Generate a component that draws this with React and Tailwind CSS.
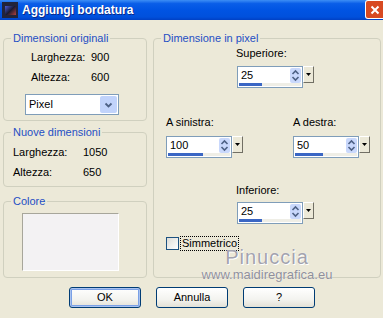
import React from 'react';

const Spin = ({ value, fill }) => (
  <div className="flex items-start">
    <div className="flex h-[22px] w-[66px] flex-col border border-[#7f9db9] bg-white">
      <div className="flex flex-1 items-start justify-between pl-[3px] pr-[1px] pt-[1px]">
        <span className="text-[11px] leading-[15px]">{value}</span>
        <div className="flex h-[15px] w-[11px] flex-col items-center justify-between rounded-[2px] bg-[#c9d8fc] py-[1px]">
          <svg width="9" height="6" viewBox="0 0 9 6">
            <path d="M1.5 5 L4.5 2 L7.5 5" fill="none" stroke="#4d6185" strokeWidth="1.6" />
          </svg>
          <svg width="9" height="6" viewBox="0 0 9 6">
            <path d="M1.5 1 L4.5 4 L7.5 1" fill="none" stroke="#4d6185" strokeWidth="1.6" />
          </svg>
        </div>
      </div>
      <div className="mx-[1px] mb-[1px] flex h-[3px] bg-[#efeee6]">
        <div className="h-full bg-[#3a66c4]" style={{ width: fill }} />
      </div>
    </div>
    <div className="flex h-[17px] w-[11px] items-center justify-center border border-b-[#716f64] border-l-white border-r-[#716f64] border-t-white bg-[#ece9d8]">
      <svg width="5" height="3" viewBox="0 0 5 3">
        <path d="M0 0 H5 L2.5 3 Z" fill="#000" />
      </svg>
    </div>
  </div>
);

const Button = ({ children, focused }) => (
  <button
    className={`h-[21px] w-[72px] rounded-[3px] border border-[#003c74] bg-[linear-gradient(to_bottom,#ffffff,#f3f3ef_60%,#e3e1d6)] text-[11px] leading-none text-black ${
      focused ? 'shadow-[inset_0_0_0_1px_#a9c2ef,inset_0_0_0_2px_#7aa0e6]' : ''
    }`}
  >
    {children}
  </button>
);

const Group = ({ label, className, children }) => (
  <fieldset className={`rounded-[4px] border border-[#d0d0bf] ${className}`}>
    <legend className="ml-[7px] px-[2px] text-[11px] leading-[13px] text-[#1f4fc4]">{label}</legend>
    {children}
  </fieldset>
);

export default function App() {
  return (
    <div className="h-[318px] w-[383px] overflow-hidden bg-[#ece9d8] font-['Liberation_Sans',Arial,sans-serif] text-[11px] text-black">
      <div className="flex h-[20px] items-start bg-[linear-gradient(to_bottom,#3d8ef5_0%,#0a5ee8_18%,#0054e3_50%,#0050dc_85%,#0040c4_100%)] pl-[2px]">
        <div className="mt-[2px] flex h-[16px] w-[16px] shrink-0 items-center justify-center bg-[#22243a]">
          <div className="h-[9px] w-[11px] bg-[linear-gradient(135deg,#4a5ad8,#1a1a30_50%,#b04040)]" />
        </div>
        <span className="ml-[4px] mt-[3px] text-[12px] font-bold leading-[14px] text-white [text-shadow:1px_1px_0_#0a2a8a]">
          Aggiungi bordatura
        </span>
        <div className="ml-auto h-[19px] w-[18px] shrink-0 rounded-l-[3px] bg-[#ffffff] pb-[1px] pl-[1px] pt-[1px]">
          <div className="flex h-full w-full items-center justify-center rounded-l-[2px] bg-[#d84a22]">
            <svg width="10" height="10" viewBox="0 0 10 10">
              <path d="M1.5 1.5 L8.5 8.5 M8.5 1.5 L1.5 8.5" stroke="#ffffff" strokeWidth="2" />
            </svg>
          </div>
        </div>
      </div>

      <div className="flex gap-[6px] pl-[3px] pt-[12px]">
        <div className="flex w-[144px] flex-col">
          <Group label="Dimensioni originali" className="h-[89px]">
            <div className="mt-[2px] flex h-[20px] items-center pl-[27px]">
              <span className="w-[60px]">Larghezza:</span>
              <span>900</span>
            </div>
            <div className="flex h-[20px] items-center pl-[27px]">
              <span className="w-[60px]">Altezza:</span>
              <span>600</span>
            </div>
            <div className="ml-[21px] mt-[7px] flex h-[21px] w-[94px] items-center justify-between border border-[#7f9db9] bg-white pl-[3px] pr-[1px]">
              <span>Pixel</span>
              <div className="flex h-[17px] w-[17px] items-center justify-center rounded-[2px] bg-[#c1d3fb]">
                <svg width="9" height="6" viewBox="0 0 9 6">
                  <path d="M1.5 1.5 L4.5 4.5 L7.5 1.5" fill="none" stroke="#4d6185" strokeWidth="1.8" />
                </svg>
              </div>
            </div>
          </Group>

          <Group label="Nuove dimensioni" className="mt-[5px] h-[61px]">
            <div className="mt-[3px] flex h-[20px] items-center pl-[9px]">
              <span className="w-[70px]">Larghezza:</span>
              <span>1050</span>
            </div>
            <div className="flex h-[20px] items-center pl-[9px]">
              <span className="w-[70px]">Altezza:</span>
              <span>650</span>
            </div>
          </Group>

          <Group label="Colore" className="mt-[8px] h-[83px]">
            <div className="ml-[18px] mt-[5px] h-[58px] w-[97px] border border-b-white border-l-[#a7a69a] border-r-white border-t-[#a7a69a] bg-[#f3f2f3]" />
          </Group>
        </div>

        <Group label="Dimensione in pixel" className="h-[246px] w-[228px]">
          <div className="flex flex-col pl-[82px]">
            <span className="mt-[2px] leading-[13px]">Superiore:</span>
            <div className="mt-[6px] ml-[1px]">
              <Spin value="25" fill="23px" />
            </div>
          </div>
          <div className="mt-[28px] flex pl-[12px]">
            <div className="flex w-[127px] flex-col">
              <span className="leading-[13px]">A sinistra:</span>
              <div className="mt-[7px]">
                <Spin value="100" fill="35px" />
              </div>
            </div>
            <div className="flex flex-col">
              <span className="leading-[13px]">A destra:</span>
              <div className="mt-[7px]">
                <Spin value="50" fill="28px" />
              </div>
            </div>
          </div>
          <div className="mt-[26px] flex flex-col pl-[82px]">
            <span className="leading-[13px]">Inferiore:</span>
            <div className="mt-[5px] ml-[1px]">
              <Spin value="25" fill="23px" />
            </div>
          </div>
          <div className="mt-[12px] flex items-center pl-[12px]">
            <div className="h-[13px] w-[13px] border border-[#1c5180] bg-[linear-gradient(135deg,#dcdcd7,#ffffff)]" />
            <span className="ml-[1px] border border-dotted border-black px-[1px] leading-[13px]">Simmetrico</span>
          </div>
          <div className="-mt-[4px] flex flex-col items-center">
            <span className="text-[20px] leading-[20px] tracking-[1px] text-[#a3a3ae] [text-shadow:0_0_1px_#fff,1px_1px_0_#fff]">
              Pinuccia
            </span>
            <span className="mt-[1px] text-[13px] leading-[13px] text-[#8f8f9a] [text-shadow:0_0_1px_#fff]">
              www.maidiregrafica.eu
            </span>
          </div>
        </Group>
      </div>

      <div className="mt-[9px] flex justify-center gap-[15px] pl-[1px]">
        <Button focused>OK</Button>
        <Button>Annulla</Button>
        <Button>?</Button>
      </div>
    </div>
  );
}
